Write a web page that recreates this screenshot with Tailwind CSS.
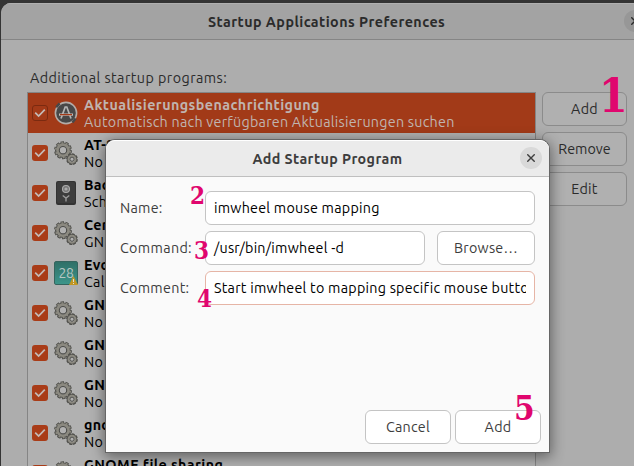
<!DOCTYPE html>
<html lang="en">
<head>
<meta charset="utf-8">
<title>Startup Applications Preferences</title>
<script src="https://cdn.jsdelivr.net/npm/@tailwindcss/browser@4"></script>
</head>
<body class="relative w-[634px] h-[466px] overflow-hidden bg-[#343434] font-['Ubuntu','Noto_Sans',sans-serif] text-[14.3px] leading-[17px] tracking-[0.25px] text-[#2b2b2b]">
<svg class="hidden">
  <symbol id="check" viewBox="0 0 16 16"><path d="M3.2 7.6 6.6 11 12.8 4.6" fill="none" stroke="#c4bab6" stroke-width="1.7"/></symbol>
  <symbol id="gears" viewBox="0 0 24 24">
    <g fill="none">
      <circle cx="9" cy="9.2" r="6.6" stroke="#50504c" stroke-width="2.4"/>
      <circle cx="9" cy="9.2" r="7.8" pathLength="100" stroke="#50504c" stroke-width="2.4" stroke-dasharray="7 3"/>
      <circle cx="9" cy="9.2" r="7.2" pathLength="100" stroke="#8b8980" stroke-width="1.7" stroke-dasharray="4 6" stroke-dashoffset="-1.5"/>
      <circle cx="9" cy="9.2" r="5.4" stroke="#8b8980" stroke-width="2.9"/>
      <circle cx="9" cy="9.2" r="3.7" stroke="#4c4c49" stroke-width="1.1"/>
      <circle cx="18" cy="18.2" r="4.3" stroke="#50504c" stroke-width="1.8"/>
      <circle cx="18" cy="18.2" r="5.1" pathLength="80" stroke="#50504c" stroke-width="1.6" stroke-dasharray="7 3"/>
      <circle cx="18" cy="18.2" r="3.5" stroke="#8b8980" stroke-width="1.9"/>
      <circle cx="18" cy="18.2" r="2.1" stroke="#4c4c49" stroke-width="1"/>
    </g>
  </symbol>
  <symbol id="close" viewBox="0 0 8 8"><path d="M.3 .3 7.7 7.7M7.7 .3 .3 7.7" fill="none" stroke="currentColor" stroke-width="1.4"/></symbol>
</svg>

<main class="ml-px mt-[3px] w-[650px] h-[463px] rounded-tl-[10px] bg-[#adadad] overflow-hidden">
  <header class="relative h-[37px] bg-[#a3a3a3] border-t border-t-[#b0b0b0] border-b border-b-[#858585] flex items-center pl-[207px]">
    <h1 class="font-bold whitespace-nowrap pt-[2px] tracking-[0.46px]">Startup Applications Preferences</h1>
    <span class="absolute left-[623px] top-[6px] w-[22px] h-[22px] rounded-full bg-[#979797] flex items-center justify-center"><svg class="w-2 h-2"><use href="#close"/></svg></span>
  </header>
  <p class="pl-[29px] pt-[30px] h-[52px]"><span class="whitespace-nowrap tracking-[0.45px]">Additional startup programs:</span></p>
  <div class="flex pl-[26px] gap-[6px]">
    <section class="w-[509px] h-[390px] border border-[#858585] bg-[#b1b1b1] text-black">
      <div class="h-10 flex items-center pl-1 bg-[#a23a18] text-[#c0b4af]">
        <span class="w-4 h-4 rounded-[3px] border border-[#7b2a10] flex items-center justify-center"><svg class="w-4 h-4 shrink-0"><use href="#check"/></svg></span>
        <svg class="w-6 h-6 ml-[6px] shrink-0" viewBox="0 0 24 24"><circle cx="12" cy="12" r="10.6" fill="#484848" stroke="#b3aca8" stroke-width="1.6"/><path d="M2.2 6.2 5.6 2.4M21.6 17.6l-3.2 4" stroke="#484848" stroke-width="2.4"/><path d="M7 17.5 11.2 6h1.6L17 17.5" fill="none" stroke="#b5b5b5" stroke-width="1.7"/><path d="M5 13.6h14" stroke="#c5bdb9" stroke-width="2.4"/><path d="M6 13.6h12" stroke="#a23a18" stroke-width="1.1"/></svg>
        <div class="ml-[6px] whitespace-nowrap"><div class="font-bold tracking-[0.43px] pt-px -mb-px">Aktualisierungsbenachrichtigung</div><div class="pt-px">Automatisch nach verfügbaren Aktualisierungen suchen</div></div>
      </div>
      <div class="h-10 flex items-center pl-1"><span class="w-4 h-4 rounded-[3px] bg-[#a93c18]"><svg class="w-4 h-4"><use href="#check"/></svg></span><svg class="w-6 h-6 ml-[6px]"><use href="#gears"/></svg><div class="ml-[6px] pt-px w-[26px] whitespace-nowrap"><div class="font-bold">AT-S</div><div>No</div></div></div>
      <div class="h-10 flex items-center pl-1"><span class="w-4 h-4 rounded-[3px] bg-[#a93c18]"><svg class="w-4 h-4"><use href="#check"/></svg></span>
        <svg class="w-6 h-6 ml-[6px]" viewBox="0 0 24 24"><rect x="2" y="0" width="20" height="24" rx="2" fill="#333"/><rect x="3" y="1" width="18" height="21" rx="1.5" fill="#3d3d3d"/><circle cx="12" cy="8" r="3.5" fill="#777" stroke="#aaa" stroke-width="1.1"/><circle cx="12" cy="8" r="1.6" fill="#aaa"/><path d="M8.7 14.5 12 17l3.3-2.5M12 17v3.5" fill="none" stroke="#999" stroke-width="1.4"/></svg>
        <div class="ml-[6px] pt-px w-[26px] whitespace-nowrap"><div class="font-bold">Bac</div><div>Sch</div></div></div>
      <div class="h-10 flex items-center pl-1"><span class="w-4 h-4 rounded-[3px] bg-[#a93c18]"><svg class="w-4 h-4"><use href="#check"/></svg></span><svg class="w-6 h-6 ml-[6px]"><use href="#gears"/></svg><div class="ml-[6px] pt-px w-[26px] whitespace-nowrap"><div class="font-bold">Cer</div><div>GN</div></div></div>
      <div class="h-10 flex items-center pl-1"><span class="w-4 h-4 rounded-[3px] bg-[#a93c18]"><svg class="w-4 h-4"><use href="#check"/></svg></span>
        <span class="relative w-6 h-6 ml-[6px] rounded-[2px] border border-[#35645e] bg-linear-to-b from-[#2f7068] to-[#3c958a] text-[#b8c6c3] text-[14px] leading-[22px] text-center tracking-[-0.5px]">28<svg class="absolute left-[14px] top-[14px] w-[9px] h-[9px]" viewBox="0 0 9 9"><path d="M4.5 0 9 9H0Z" fill="#c29722"/><path d="M4.5 3v3M4.5 7v1" stroke="#ddd"/></svg></span>
        <div class="ml-[6px] pt-px w-[26px] whitespace-nowrap"><div class="font-bold">Evo</div><div>Cal</div></div></div>
      <div class="h-10 flex items-center pl-1"><span class="w-4 h-4 rounded-[3px] bg-[#a93c18]"><svg class="w-4 h-4"><use href="#check"/></svg></span><svg class="w-6 h-6 ml-[6px]"><use href="#gears"/></svg><div class="ml-[6px] pt-px w-[26px] whitespace-nowrap"><div class="font-bold">GN</div><div>No</div></div></div>
      <div class="h-10 flex items-center pl-1"><span class="w-4 h-4 rounded-[3px] bg-[#a93c18]"><svg class="w-4 h-4"><use href="#check"/></svg></span><svg class="w-6 h-6 ml-[6px]"><use href="#gears"/></svg><div class="ml-[6px] pt-px w-[26px] whitespace-nowrap"><div class="font-bold">GN</div><div>No</div></div></div>
      <div class="h-10 flex items-center pl-1"><span class="w-4 h-4 rounded-[3px] bg-[#a93c18]"><svg class="w-4 h-4"><use href="#check"/></svg></span><svg class="w-6 h-6 ml-[6px]"><use href="#gears"/></svg><div class="ml-[6px] pt-px w-[26px] whitespace-nowrap"><div class="font-bold">GN</div><div>No</div></div></div>
      <div class="h-10 flex items-center pl-1"><span class="w-4 h-4 rounded-[3px] bg-[#a93c18]"><svg class="w-4 h-4"><use href="#check"/></svg></span><svg class="w-6 h-6 ml-[6px]"><use href="#gears"/></svg><div class="ml-[6px] pt-px w-[26px] whitespace-nowrap"><div class="font-bold">gno</div><div>No</div></div></div>
      <div class="h-10 flex items-center pl-1"><span class="w-4 h-4 rounded-[3px] bg-[#a93c18]"><svg class="w-4 h-4"><use href="#check"/></svg></span><svg class="w-6 h-6 ml-[6px]"><use href="#gears"/></svg><div class="ml-[6px] pt-px whitespace-nowrap"><div class="font-bold tracking-[0.4px]">GNOME file sharing</div><div>&nbsp;</div></div></div>
    </section>
    <nav class="w-[85px] flex flex-col gap-[6px]">
      <button class="h-[34px] rounded-[6px] border border-[#8b8b8b] bg-[#b0b0b0]">Add</button>
      <button class="h-[34px] rounded-[6px] border border-[#8b8b8b] bg-[#b0b0b0] tracking-normal">Remove</button>
      <button class="h-[34px] rounded-[6px] border border-[#8b8b8b] bg-[#b0b0b0]">Edit</button>
    </nav>
  </div>
</main>

<div role="dialog" class="absolute left-[106px] top-[140px] w-[443px] h-[312px] rounded-t-[9px] bg-[#fafafa] text-[#3d3d3d] shadow-[0_0_0_1px_#666,0_3px_14px_2px_rgba(0,0,0,0.45)] flex flex-col">
  <header class="relative h-[37px] shrink-0 rounded-t-[9px] bg-[#ebebeb] border-t border-t-white border-b border-b-[#bfbfbf] flex items-center justify-center">
    <h2 class="font-bold whitespace-nowrap pt-[2px] tracking-[0.4px]">Add Startup Program</h2>
    <span class="absolute left-[414px] top-[6px] w-[22px] h-[22px] rounded-full bg-[#d9d9d9] flex items-center justify-center"><svg class="w-2 h-2"><use href="#close"/></svg></span>
  </header>
  <form class="grid grid-cols-[79px_minmax(0,1fr)] auto-rows-[34px] gap-x-[6px] gap-y-[6px] px-[14px] pt-[14px] items-center">
    <label>Name:</label>
    <div class="h-[34px] rounded-[6px] border border-[#c4c4c4] bg-white text-black px-2 flex items-center"><span class="whitespace-nowrap">imwheel mouse mapping</span></div>
    <label class="tracking-[0.35px]">Command:</label>
    <div class="flex gap-3 h-[34px]">
      <div class="w-[220px] rounded-[6px] border border-[#c4c4c4] bg-white text-black px-2 flex items-center"><span class="whitespace-nowrap">/usr/bin/imwheel -d</span></div>
      <button type="button" class="flex-1 rounded-[6px] border border-[#c4c4c4] bg-white">Browse…</button>
    </div>
    <label class="tracking-[0.3px]">Comment:</label>
    <div class="h-[34px] rounded-[6px] border border-[#e6b5a6] bg-white text-black px-2 flex items-center"><div class="w-[312px] overflow-hidden whitespace-nowrap">Start imwheel to mapping specific mouse butto</div></div>
  </form>
  <footer class="mt-auto mb-2 mr-2 flex justify-end gap-1">
    <button class="w-[86px] h-[34px] rounded-[6px] border border-[#c4c4c4] bg-white">Cancel</button>
    <button class="w-[86px] h-[34px] rounded-[6px] border border-[#c4c4c4] bg-white">Add</button>
  </footer>
</div>

<div class="font-['DejaVu_Serif_Condensed','DejaVu_Serif',serif] font-bold text-[#e0066e] leading-none tracking-normal">
  <span class="absolute left-[599px] top-[73px] text-[46px]">1</span>
  <span class="absolute left-[190px] top-[184px] text-[24px]">2</span>
  <span class="absolute left-[194px] top-[239px] text-[24px]">3</span>
  <span class="absolute left-[197px] top-[287px] text-[24px]">4</span>
  <span class="absolute left-[514px] top-[392px] text-[33px]">5</span>
</div>
</body>
</html>
